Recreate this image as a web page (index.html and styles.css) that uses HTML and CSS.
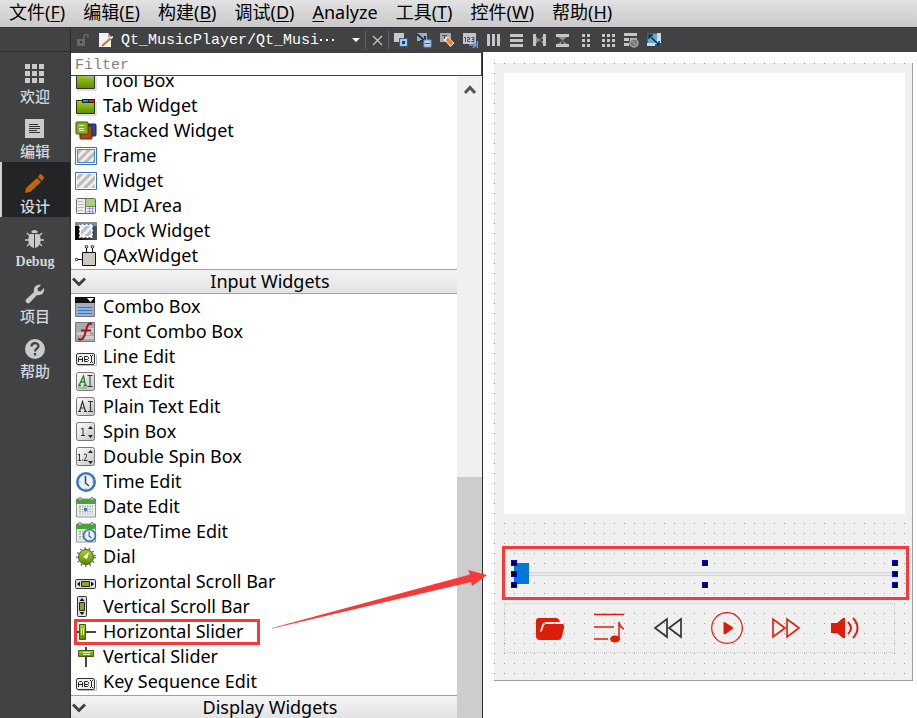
FILE: index.html
```
<!DOCTYPE html>
<html lang="zh-CN">
<head>
<meta charset="utf-8">
<title>Qt_MusicPlayer</title>
<link rel="stylesheet" href="styles.css">
</head>
<body>
<svg class="defs" aria-hidden="true">
  <defs>
    <linearGradient id="green" x1="0" y1="0" x2="0" y2="1"><stop offset="0" stop-color="#a5d32c"/><stop offset="1" stop-color="#5d8a00"/></linearGradient>
    <linearGradient id="silver" x1="0" y1="0" x2="1" y2="1"><stop offset="0" stop-color="#fff"/><stop offset="1" stop-color="#c4c4c4"/></linearGradient>
    <linearGradient id="dark" x1="0" y1="0" x2="1" y2="0"><stop offset="0" stop-color="#000"/><stop offset="1" stop-color="#555"/></linearGradient>
    <pattern id="stripes" width="6" height="6" patternUnits="userSpaceOnUse" patternTransform="rotate(45)"><rect width="6" height="6" fill="#eee"/><rect width="3" height="6" fill="#bbb"/></pattern>
    <symbol id="calendar" viewBox="0 0 22 22"><path d="M1.500 3h19v18h-19z" fill="#eee" stroke="#8b9a8b"/><path d="M1 3h20v5H1z" fill="#43a832"/><path d="M4 9.500h14v9H4z" fill="#aaa"/><path d="M4 12h14M4 14.500h14M4 17h14M6.500 9v10M9 9v10M11.500 9v10M14 9v10M16.500 9v10" stroke="#f4f4f4"/><circle cx="5" cy="3" r="1.500" fill="#ddd" stroke="#777"/><circle cx="17" cy="3" r="1.500" fill="#ddd" stroke="#777"/></symbol>
    <symbol id="clock" viewBox="0 0 22 22"><circle cx="11" cy="11" r="8.700" fill="#eef1f5" stroke="#3d76bd" stroke-width="2.600"/><path d="M10.500 5v7l3.500 3" fill="none" stroke="#445" stroke-width="1.500"/><path d="M11 17v1M4.500 11h1M17 11h1" stroke="#99a"/></symbol>
    <symbol id="lineedit" viewBox="0 0 22 22"><path d="M3 19.500h18.500V9" fill="none" stroke="#bbb"/><rect x="1.500" y="7.500" width="18" height="11" rx="1.500" fill="#f0f0f0" stroke="#333"/><path d="M3.500 16v-4.500l1-1h2l1 1V16M3.500 13.500h4M9.500 10.500v5M9.500 10.500h3l1 1v1l-1 1h-3M12.500 13.500l1 1-1 1h-3M16.500 10v6M15 9.500h1M17 9.500h1M15 16.500h1M17 16.500h1" fill="none" stroke="#222"/></symbol>
  </defs>
</svg>

<nav class="menubar" aria-label="菜单">
  <a href="#">文件(<u>F</u>)</a><a href="#">编辑(<u>E</u>)</a><a href="#">构建(<u>B</u>)</a><a href="#">调试(<u>D</u>)</a><a href="#"><u>A</u>nalyze</a><a href="#">工具(<u>T</u>)</a><a href="#">控件(<u>W</u>)</a><a href="#">帮助(<u>H</u>)</a>
</nav>

<div class="frame">
  <nav class="modes" aria-label="模式">
    <div class="modes-head"></div>
    <button class="mode"><svg viewBox="0 0 20 20"><path d="M0 0h5v5H0zM7 0h5v5H7zM14 0h5v5h-5zM0 7h5v5H0zM7 7h5v5H7zM14 7h5v5h-5zM0 14h5v5H0zM7 14h5v5H7zM14 14h5v5h-5z"/></svg><span>欢迎</span></button>
    <button class="mode"><svg viewBox="0 0 20 20"><path d="M0 0h19v19H0z"/><path d="M4 5.500h9M4 7.500h11M4 9.500h11M4 11.500h8M4 13.500h11" stroke="#333"/></svg><span>编辑</span></button>
    <button class="mode selected"><svg viewBox="0 0 20 20"><path d="M0 19l1-5L12 4l4 4L5 18zM13 3l2-3h1l3 3v1l-2 3z"/></svg><span>设计</span></button>
    <button class="mode"><svg viewBox="0 0 20 20"><path d="M6 3a4 4 0 0 1 7 0l-1.500 1h-4z"/><path d="M9 5v14C3 18 2 9 5 5zM10 5v14c6-1 7-10 4-14z"/><path d="M5 7L2 4M4 11H0M5 14l-3 3M14 7l3-3M15 11h4M14 14l3 3" stroke="#c8cacb" stroke-width="1.300"/></svg><span class="latin">Debug</span></button>
    <button class="mode"><svg viewBox="0 0 20 20"><path d="M1 15.500L9 8c-1-4 2-8 7-7l-3.500 3.500.5 2.500 2.500.5L19 4c1 5-3 8-7 7l-7.500 8C2 20.500-.5 17.500 1 15.500z"/></svg><span>项目</span></button>
    <button class="mode"><svg viewBox="0 0 20 20"><circle cx="10" cy="10" r="10"/><path d="M6.500 7.500c0-4.500 7-4.500 7-.5 0 2.500-3.500 2.800-3.500 5.500M10 14v2.500" fill="none" stroke="#404244" stroke-width="2.200"/></svg><span>帮助</span></button>
  </nav>

  <div class="main">
    <header class="toolbar">
      <svg class="lock" viewBox="0 0 12 14"><path d="M0 6h8v7H0z" fill="#66686a"/><path d="M7 6V2.500C7 1 11 1 11 2.500V5" fill="none" stroke="#66686a" stroke-width="1.500"/><path d="M3 8h2v2H3z" fill="#333"/></svg>
      <svg class="doc" viewBox="0 0 14 16"><path d="M0 1h9l3 4v10H0z" fill="#f2f2f2"/><path d="M9 1v4h3z" fill="#aaa"/><path d="M3 14l9-8" stroke="#c97226" stroke-width="2"/><path d="M11.500 6.500L14 4.500" stroke="#eee" stroke-width="2"/></svg>
      <button class="file"><span>Qt_MusicPlayer/Qt_Musi</span><svg class="dots" viewBox="0 0 18 4"><path d="M1 1h2v2H1zM7 1h2v2H7zM13 1h2v2h-2z"/></svg><svg class="caret" viewBox="0 0 8 4"><path d="M0 0h8L4 4z"/></svg></button>
      <button class="close" aria-label="关闭"><svg viewBox="0 0 11 11"><path d="M1 1l9 9M10 1l-9 9" stroke="#c4c5c6" stroke-width="1.200"/></svg></button>
      <div class="tools">
        <button aria-label="编辑控件"><svg viewBox="0 0 16 16"><path d="M1 1h10v9H1z" fill="#c6c8ca"/><path d="M6.500 6.500h8v8h-8z" fill="#a8c4ec" stroke="#37598d"/><path d="M9 9h3v3H9z" fill="#123f83"/></svg></button>
        <button aria-label="编辑信号"><svg viewBox="0 0 16 16"><path d="M1 1h10v8H1z" fill="#a7acb3"/><path d="M1 2l8 7M9 4v5H4" fill="none" stroke="#15395f" stroke-width="2"/><path d="M8 8h7v7H8z" fill="#bdd4f3" stroke="#7094c4"/><path d="M9 11.500h5" stroke="#26579b"/></svg></button>
        <button aria-label="编辑伙伴"><svg viewBox="0 0 16 16"><path d="M1 1h11v9H1z" fill="#a9abad"/><path d="M3 3.500h5M5.500 3v5" stroke="#555"/><path d="M4.500 8l3-3 3 2-3 3z" fill="#fff"/><path d="M6 8l3-3 6 6-3.500 3.500z" fill="#f08340" stroke="#fff"/></svg></button>
        <button aria-label="编辑顺序"><svg viewBox="0 0 16 16"><path d="M1 1h13v11H1z" fill="#c3c7cc"/><path d="M2 5.500h1.500V10M5 5.500h2.500v2H5.500v2H8M9.500 5.500H12v4H9.500M10 7.500h2" fill="none" stroke="#275599"/><path d="M7 13h6M11 10l3 3-3 3M15.500 9v7" fill="none" stroke="#6f9fe3" stroke-width="1.500"/></svg></button>
        <button aria-label="水平布局"><svg viewBox="0 0 16 16"><path d="M2 2h3v12H2zM7 2h3v12H7zM12 2h3v12h-3z"/></svg></button>
        <button aria-label="垂直布局"><svg viewBox="0 0 16 16"><path d="M2 2h13v3H2zM2 7h13v3H2zM2 12h13v3H2z"/></svg></button>
        <button aria-label="水平分裂"><svg viewBox="0 0 16 16"><path d="M2 2h3v12H2zM12 2h3v12h-3z"/><path d="M5 4l3 4-3 4zM12 4L9 8l3 4zM5 7h7v2H5z" fill="#8d8f91"/></svg></button>
        <button aria-label="垂直分裂"><svg viewBox="0 0 16 16"><path d="M2 2h13v3H2zM2 12h13v3H2z"/><path d="M4 5h9L8.500 8.500zM4 12h9L8.500 8zM7.500 5h2v7h-2z" fill="#8d8f91"/></svg></button>
        <button aria-label="表单布局"><svg viewBox="0 0 16 16"><path d="M5 2h3v3H5zM10 2h3v3h-3zM5 7h3v3H5zM10 7h3v3h-3zM5 12h3v3H5zM10 12h3v3h-3z"/></svg></button>
        <button aria-label="栅格布局"><svg viewBox="0 0 16 16"><path d="M2 2h3v3H2zM7 2h3v3H7zM12 2h3v3h-3zM2 7h3v3H2zM7 7h3v3H7zM12 7h3v3h-3zM2 12h3v3H2zM7 12h3v3H7zM12 12h3v3h-3z"/></svg></button>
        <button aria-label="打破布局"><svg viewBox="0 0 16 16"><path d="M1 1h13v3H1zM1 6h5v3H1zM7 6h7v3H7zM1 11h5v3H1z"/><circle cx="11" cy="11" r="4" fill="#777" stroke="#a5a5a5" stroke-width="1.500"/><path d="M8.500 8.500l5 5" stroke="#aaa"/></svg></button>
        <button aria-label="调整大小"><svg viewBox="0 0 16 16"><path d="M1 1h14v13H1z" fill="#1b6fa8"/><path d="M2 2h9v9H2z" fill="#62a9d4"/><path d="M11 1h4v10h-4zM1 11h10v3H1z" fill="#c9dce9"/><path d="M3 3l9 9M3 7V3h4M13 9v4H9" fill="none" stroke="#0c2c45" stroke-width="1.500"/></svg></button>
      </div>
    </header>

    <div class="workspace">
      <section class="panel" aria-label="Widget Box">
        <input class="filter" type="text" placeholder="Filter" aria-label="Filter">
        <div class="box">
          <div class="list">
            <ul>
              <li><svg viewBox="0 0 22 22"><path d="M2 20h19V7" fill="none" stroke="#bbb"/><path d="M1.500 3.500h18v15h-18z" fill="url(#green)" stroke="#333"/><path d="M9 4h10v4h-8z" fill="#aaa"/></svg>Tool Box</li>
              <li><svg viewBox="0 0 22 22"><path d="M2 20h19V7" fill="none" stroke="#bbb"/><path d="M1.500 5.500h18v13h-18z" fill="url(#green)" stroke="#263800"/><path d="M7 4h13v4H7z" fill="#222"/><path d="M8 5h5v2H8z" fill="#1c8bef"/><path d="M14 5h5v2h-5z" fill="#e3211d"/></svg>Tab Widget</li>
              <li><svg viewBox="0 0 22 22"><rect x="9" y="4" width="12" height="12" rx="1" fill="#1b4dad" stroke="#12285d"/><rect x="5" y="6" width="12" height="13" rx="1" fill="#b8420c" stroke="#601e00"/><rect x="1" y="2" width="12" height="12" rx="1" fill="#83b224" stroke="#36530a"/><path d="M4 5.500h5M4 8.500h5M4 10.500h5" stroke="#e9ffba"/></svg>Stacked Widget</li>
              <li><svg viewBox="0 0 22 22"><path d="M.5 2.500h21v17H.5z" fill="#fff" stroke="#3473bd"/><path d="M2.500 4.500h17v13h-17z" fill="url(#stripes)" stroke="#4b83c4"/></svg>Frame</li>
              <li><svg viewBox="0 0 22 22"><path d="M.5 2.500h21v17H.5z" fill="#fff" stroke="#3473bd"/><path d="M2 4h18v14H2z" fill="url(#stripes)"/></svg>Widget</li>
              <li><svg viewBox="0 0 22 22"><rect x="1.500" y="3.500" width="19" height="15" rx="1" fill="#eee" stroke="#666"/><path d="M11 4h9v7h-9z" fill="#a8d17b"/><path d="M10.500 4v14M11 11.500h9" stroke="#777"/><path d="M3 6.500h5M3 9.500h6M3 12.500h6M3 15.500h5" stroke="#bbb"/><path d="M12 13.500h7M12 16.500h7M14.500 12v6M17.500 12v6" stroke="#8fa6d0"/></svg>MDI Area</li>
              <li><svg viewBox="0 0 22 22"><path d="M0 2h22v18H0z" fill="url(#dark)"/><path d="M0 2h22v4H0z" fill="#888"/><path d="M4 4h14v14H4z" fill="#fff"/><path d="M6 6h10v10H6z" fill="url(#stripes)"/><path d="M4.500 4.500h13v13h-13z" fill="none" stroke="#2563b0" stroke-dasharray="2"/></svg>Dock Widget</li>
              <li><svg viewBox="0 0 22 22"><path d="M7.500 7.500h13v13h-13z" fill="#ccc9c0" stroke="#111"/><path d="M3 14.500h4M11.500 7V3M17.500 7V3" stroke="#111"/><circle cx="1.500" cy="14.500" r="1.200" fill="#fff" stroke="#111"/><circle cx="11.500" cy="1.800" r="1.300" fill="#fff" stroke="#111"/><circle cx="17.500" cy="1.800" r="1.300" fill="#fff" stroke="#111"/></svg>QAxWidget</li>
            </ul>
            <h2><svg viewBox="0 0 14 10"><path d="M1 1.500l6 6 6-6" /></svg>Input Widgets</h2>
            <ul>
              <li><svg viewBox="0 0 22 22"><path d="M.5 1.500h19v19H.5z" fill="#aaa" stroke="#777"/><path d="M0 1h20v6H0z" fill="#111"/><path d="M12 2h7l-3.500 4z" fill="#fff"/><path d="M3 9h14v10H3z" fill="#8fb3e0"/><path d="M3 11.500h14M3 14.500h14M3 17.500h14" stroke="#4173b5"/></svg>Combo Box</li>
              <li><svg viewBox="0 0 22 22"><path d="M.5 1.500h19v19H.5z" fill="#aaa" stroke="#777"/><path d="M10 7h9v4h-9zM2 11h13v3H2zM9 15h10v3H9z" fill="#ccc"/><path d="M17 3c-5-2-5 4-7 10-1 4-3 7-7 5M6 9.500h10" fill="none" stroke="#a0171d" stroke-width="2"/></svg>Font Combo Box</li>
              <li><svg><use href="#lineedit"/></svg>Line Edit</li>
              <li><svg viewBox="0 0 22 22"><rect x="1.500" y="1.500" width="18" height="18" rx="2" fill="url(#silver)" stroke="#777"/><path d="M4 14.500L8.500 5l2 9.500M6 11h4M3 14.500h3M8.500 14.500H12" fill="none" stroke="#247c32" stroke-width="1.300"/><path d="M3 17h9" stroke="#47a04e"/><path d="M15 5v10M12.500 4.500h5M12.500 15.500h5" stroke="#333"/></svg>Text Edit</li>
              <li><svg viewBox="0 0 22 22"><rect x="1.500" y="1.500" width="18" height="18" rx="2" fill="url(#silver)" stroke="#777"/><path d="M4.500 15.500l3-10 3 10M5.500 12h4M3 15.500h3M9 15.500h3M15.500 5v11M13 5.500h5M13 15.500h5" fill="none" stroke="#333" stroke-width="1.200"/></svg>Plain Text Edit</li>
              <li><svg viewBox="0 0 22 22"><rect x="1.500" y="1.500" width="18" height="18" rx="2" fill="url(#silver)" stroke="#777"/><path d="M6 8l2-1v7M6 14.500h4" fill="none" stroke="#333"/><path d="M13 8h5l-2.500-3zM13 14h5l-2.500 3z" fill="#222"/></svg>Spin Box</li>
              <li><svg viewBox="0 0 22 22"><rect x="1.500" y="1.500" width="18" height="18" rx="2" fill="url(#silver)" stroke="#777"/><path d="M4.500 14V8L3 9M3 14.500h3M7.500 13.500v1M9 8.500c3-1.500 4 1 0 6h3.500" fill="none" stroke="#333"/><path d="M13 7h5l-2.500-3zM13 15h5l-2.500 3z" fill="#222"/></svg>Double Spin Box</li>
              <li><svg><use href="#clock"/></svg>Time Edit</li>
              <li><svg viewBox="0 0 22 22"><use href="#calendar"/><path d="M9 12h3v3H9z" fill="#3978c1"/></svg>Date Edit</li>
              <li><svg viewBox="0 0 22 22"><use href="#calendar"/><use href="#clock" x="7" y="7" width="15" height="15"/></svg>Date/Time Edit</li>
              <li><svg viewBox="0 0 22 22"><circle cx="11" cy="11" r="9" fill="none" stroke="#555" stroke-width="1.500" stroke-dasharray="1.500 3"/><circle cx="11" cy="11" r="7.500" fill="url(#green)" stroke="#46542b"/><path d="M14 6l-2 7-4-2z" fill="#fff"/></svg>Dial</li>
              <li><svg viewBox="0 0 22 22"><rect x=".5" y="8.500" width="20" height="9" rx="1" fill="#ddd" stroke="#333"/><path d="M6.500 10.500h8v5h-8z" fill="#85aa22" stroke="#222"/><path d="M5 10.500v5L2 13zM16 10.500v5l3-2.500z" fill="#111"/></svg>Horizontal Scroll Bar</li>
              <li><svg viewBox="0 0 22 22"><rect x="2.500" y=".5" width="9" height="20" rx="1" fill="#ddd" stroke="#333"/><path d="M4.500 6.500h5v8h-5z" fill="#85aa22" stroke="#222"/><path d="M4.500 5h5L7 2zM4.500 16h5L7 19z" fill="#111"/></svg>Vertical Scroll Bar</li>
              <li class="marked"><svg viewBox="0 0 22 22"><path d="M1 11h20" stroke="#444" stroke-width="2"/><path d="M4.500 3.500h6v15h-6z" fill="url(#green)" stroke="#405b13"/><path d="M6.500 7v7M8.500 7v7" stroke="#e5ffaa"/></svg>Horizontal Slider</li>
              <li><svg viewBox="0 0 22 22"><path d="M11 1v20" stroke="#444" stroke-width="2"/><path d="M3.500 4.500h15v6h-15z" fill="url(#green)" stroke="#405b13"/><path d="M8 6.500h7M8 8.500h7" stroke="#e5ffaa"/></svg>Vertical Slider</li>
              <li><svg><use href="#lineedit"/></svg>Key Sequence Edit</li>
            </ul>
            <h2><svg viewBox="0 0 14 10"><path d="M1 1.500l6 6 6-6"/></svg>Display Widgets</h2>
          </div>
          <div class="scrollbar"><svg viewBox="0 0 12 9"><path d="M1 8l5-5.500L11 8"/></svg><div class="scroll-thumb"></div></div>
        </div>
      </section>

      <main class="canvas">
        <div class="form">
          <div class="playlist"></div>
          <div class="slider">
            <input type="range" min="0" max="100" value="0" aria-label="播放进度">
            <i class="grip top left"></i><i class="grip top center"></i><i class="grip top right"></i>
            <i class="grip middle left"></i><i class="grip middle right"></i>
            <i class="grip bottom left"></i><i class="grip bottom center"></i><i class="grip bottom right"></i>
          </div>
          <div class="controls">
            <button aria-label="打开"><svg viewBox="0 0 32 32"><path d="M5 6h17q3 0 4 4H13q-4 0-5 3l-2 6q0 2 2 0l2-6q1-1 2-1h16q3 0 2 4l-2 8q-1 4-4 4H6q-4 0-4-4V9q0-3 3-3z" fill="#dc1e08"/></svg></button>
            <button aria-label="播放列表"><svg viewBox="0 0 32 32"><path d="M1 2.500h30M1 15h20M1 27h14" stroke="#dc1e08" stroke-width="1.400"/><path d="M26 27V10q1 5 5 7" fill="none" stroke="#dc1e08" stroke-width="1.500"/><ellipse cx="22" cy="27" rx="5" ry="3.500" fill="#dc1e08"/></svg></button>
            <button aria-label="上一首"><svg viewBox="0 0 32 32"><path d="M15 7v18L3 16zM29 7v18L17 16z" fill="none" stroke="#333" stroke-width="1.700"/></svg></button>
            <button aria-label="播放"><svg viewBox="0 0 32 32"><circle cx="16" cy="16" r="15.300" fill="none" stroke="#dc1e08" stroke-width="1.200"/><path d="M12.500 10.500q0-1 2 0l7 4.500q1.500 1 0 2l-7 5q-2 1-2-1z" fill="#dc1e08"/></svg></button>
            <button aria-label="下一首"><svg viewBox="0 0 32 32"><path d="M3 7v18l12-9zM17 7v18l12-9z" fill="none" stroke="#dc1e08" stroke-width="1.600"/></svg></button>
            <button aria-label="音量"><svg viewBox="0 0 32 32"><path d="M2 11h6l6-5h2v20h-2l-6-5H2z" fill="#dc1e08"/><path d="M19 10q6 6 0 12M24 6q9 10 0 20" fill="none" stroke="#dc1e08" stroke-width="1.900"/></svg></button>
          </div>
        </div>
      </main>
      <svg class="arrow" viewBox="0 0 217 60" aria-hidden="true"><path d="M1 58L199 4.500 197 0l19 5-15 11-1-4L1 58.500z"/></svg>
    </div>
  </div>
</div>
</body>
</html>
```
FILE: styles.css
```
*, ::before, ::after { box-sizing: border-box; }
body {
  margin: 0;
  height: 100vh;
  overflow: hidden;
  display: flex;
  flex-direction: column;
  background: #404244;
  color: #000;
  font: 18px/25px "Noto Sans", "Noto Sans CJK SC", sans-serif;
}
button { border: 0; padding: 0; background: none; color: inherit; font: inherit; }
svg { display: block; flex: none; }
.defs { position: absolute; width: 0; height: 0; }

.menubar {
  display: flex;
  gap: 18px;
  height: 27px;
  flex: none;
  padding-left: 9px;
  background: linear-gradient(#e2e2e2, #c9c9c9);
  white-space: nowrap;
}
.menubar a { color: #000; text-decoration: none; }
.menubar u { text-underline-offset: 2px; text-decoration-thickness: 1px; }

.frame { display: flex; flex: 1; min-height: 0; }

.modes {
  width: 71px;
  flex: none;
  border-right: 1px solid #2c2d2f;
}
.modes-head { height: 25px; border-bottom: 1px solid #2c2d2f; border-top: 1px solid #303234; }
.mode {
  display: flex;
  flex-direction: column;
  align-items: center;
  gap: 2px;
  width: 100%;
  height: 55px;
  padding-top: 12px;
  color: #d3d8dc;
  font: 500 15px/20px "Noto Sans CJK SC", sans-serif;
}
.mode svg { width: 20px; height: 20px; fill: #c8cacb; }
.mode .latin { font: bold 14px/22px "Liberation Serif", serif; }
.mode.selected { background: #232425; box-shadow: inset 2px 0 #d0d0d0; }
.mode.selected svg { fill: #c06500; }

.main { flex: 1; min-width: 0; display: flex; flex-direction: column; }
.toolbar {
  display: flex;
  align-items: center;
  height: 25px;
  flex: none;
  padding-left: 6px;
  border-top: 1px solid #303234;
  color: #fff;
}
.lock { width: 12px; height: 14px; margin-right: 10px; }
.doc { width: 14px; height: 16px; margin-right: 8px; }
.file {
  display: flex;
  align-items: center;
  width: 245px;
  padding-right: 5px;
  border-right: 1px solid #5c5e60;
  font: 15px/18px "Liberation Mono", monospace;
}
.file span { padding-top: 2px; }
.file svg { fill: #fff; }
.dots { width: 18px; height: 4px; }
.caret { width: 8px; height: 4px; margin-left: auto; }
.close { display: grid; place-items: center; width: 23px; height: 18px; border-right: 1px solid #5c5e60; }
.close svg { width: 11px; height: 11px; }
.tools { display: flex; }
.tools button { display: grid; place-items: center; width: 23px; height: 24px; }
.tools svg { width: 16px; height: 16px; fill: #c5c6c7; }

.workspace { position: relative; display: flex; flex: 1; min-height: 0; background: #fff; }
.panel {
  width: 412px;
  flex: none;
  display: flex;
  flex-direction: column;
  border-right: 1px solid #2c2d2f;
}
.filter {
  height: 24px;
  flex: none;
  margin: 0;
  padding: 2px 4px 0;
  border: 1px solid #404244;
  border-left: 0;
  border-radius: 0;
  outline: 0;
  background: #fff;
  font: 15px/20px "Liberation Mono", monospace;
}
.filter::placeholder { color: #808080; opacity: 1; }
.box { display: flex; flex: 1; min-height: 0; overflow: hidden; }
.list { flex: 1; margin-top: -8px; }
.list ul { margin: 0; padding: 0; list-style: none; }
.list li {
  position: relative;
  display: flex;
  align-items: center;
  gap: 6px;
  height: 25px;
  padding-left: 4px;
  white-space: nowrap;
}
.list li svg { width: 22px; height: 22px; }
.list h2 {
  display: flex;
  align-items: center;
  height: 25px;
  margin: 1px 0 0;
  border: 1px solid #a0a0a0;
  border-width: 1px 0;
  background: linear-gradient(#f4f4f4, #e2e2e2);
  font: inherit;
  justify-content: center;
  position: relative;
  padding-left: 12px;
}
.list h2 svg {
  position: absolute;
  left: 1px;
  top: 7px;
  width: 14px;
  height: 10px;
  fill: none;
  stroke: #404040;
  stroke-width: 3;
}
.list .marked::after {
  content: "";
  position: absolute;
  z-index: 1;
  left: 3px;
  top: 0;
  width: 186px;
  height: 26px;
  border: 3px solid #fb3838;
}
.scrollbar {
  display: flex;
  flex-direction: column;
  align-items: center;
  justify-content: space-between;
  width: 25px;
  padding-top: 9px;
  background: #f0f0f0;
}
.scrollbar svg { width: 12px; height: 9px; fill: none; stroke: #555; stroke-width: 3; }
.scroll-thumb { width: 100%; height: 38%; background: #cdcdcd; }

.canvas { flex: 1; min-width: 0; padding: 11px 4px 0 11px; }
.form {
  padding: 10px 7px 27px 10px;
  border: 1px solid #a0a0a0;
  border-width: 0 1px 1px 0;
  background:
    linear-gradient(90deg, transparent 1px, #f0f0f0 1px) 0 0 / 10px 10px,
    linear-gradient(#969696 1px, #f0f0f0 1px) 0 0 / 10px 10px;
}
.playlist { height: 441px; background: #fff; }
.slider { position: relative; height: 22px; margin: 49px 10px 0; }
.slider::after {
  content: "";
  position: absolute;
  inset: -17px -14px -15px -12px;
  border: 3px solid #fb3838;
  pointer-events: none;
}
.slider input { display: block; width: 100%; height: 22px; margin: 0; appearance: none; background: none; }
.slider input::-webkit-slider-runnable-track {
  height: 4px;
  border: 1px solid #d3d5d5;
  border-width: 1px 0;
  background: #e7eaea;
}
.slider input::-webkit-slider-thumb {
  appearance: none;
  width: 15px;
  height: 21px;
  margin-top: -10px;
  background: #0078d7;
}
.grip {
  position: absolute;
  width: 6px;
  height: 6px;
  margin: -3px;
  border: 1px solid #0000f0;
  background: #000;
}
.top { top: 0; }
.middle { top: 50%; }
.bottom { top: 100%; }
.left { left: 0; }
.center { left: 50%; }
.right { left: 100%; }

.controls {
  display: grid;
  grid-template-columns: repeat(6, 1fr);
  height: 50px;
  margin: 18px 10px 0 0;
  padding: 0 20px 0 15px;
  border: 1px dotted #ccc;
}
.controls button { display: grid; place-items: center; }
.controls svg { width: 32px; height: 32px; }

.arrow { position: absolute; left: 200px; top: 518px; width: 217px; height: 60px; fill: #fb3838; }
```
